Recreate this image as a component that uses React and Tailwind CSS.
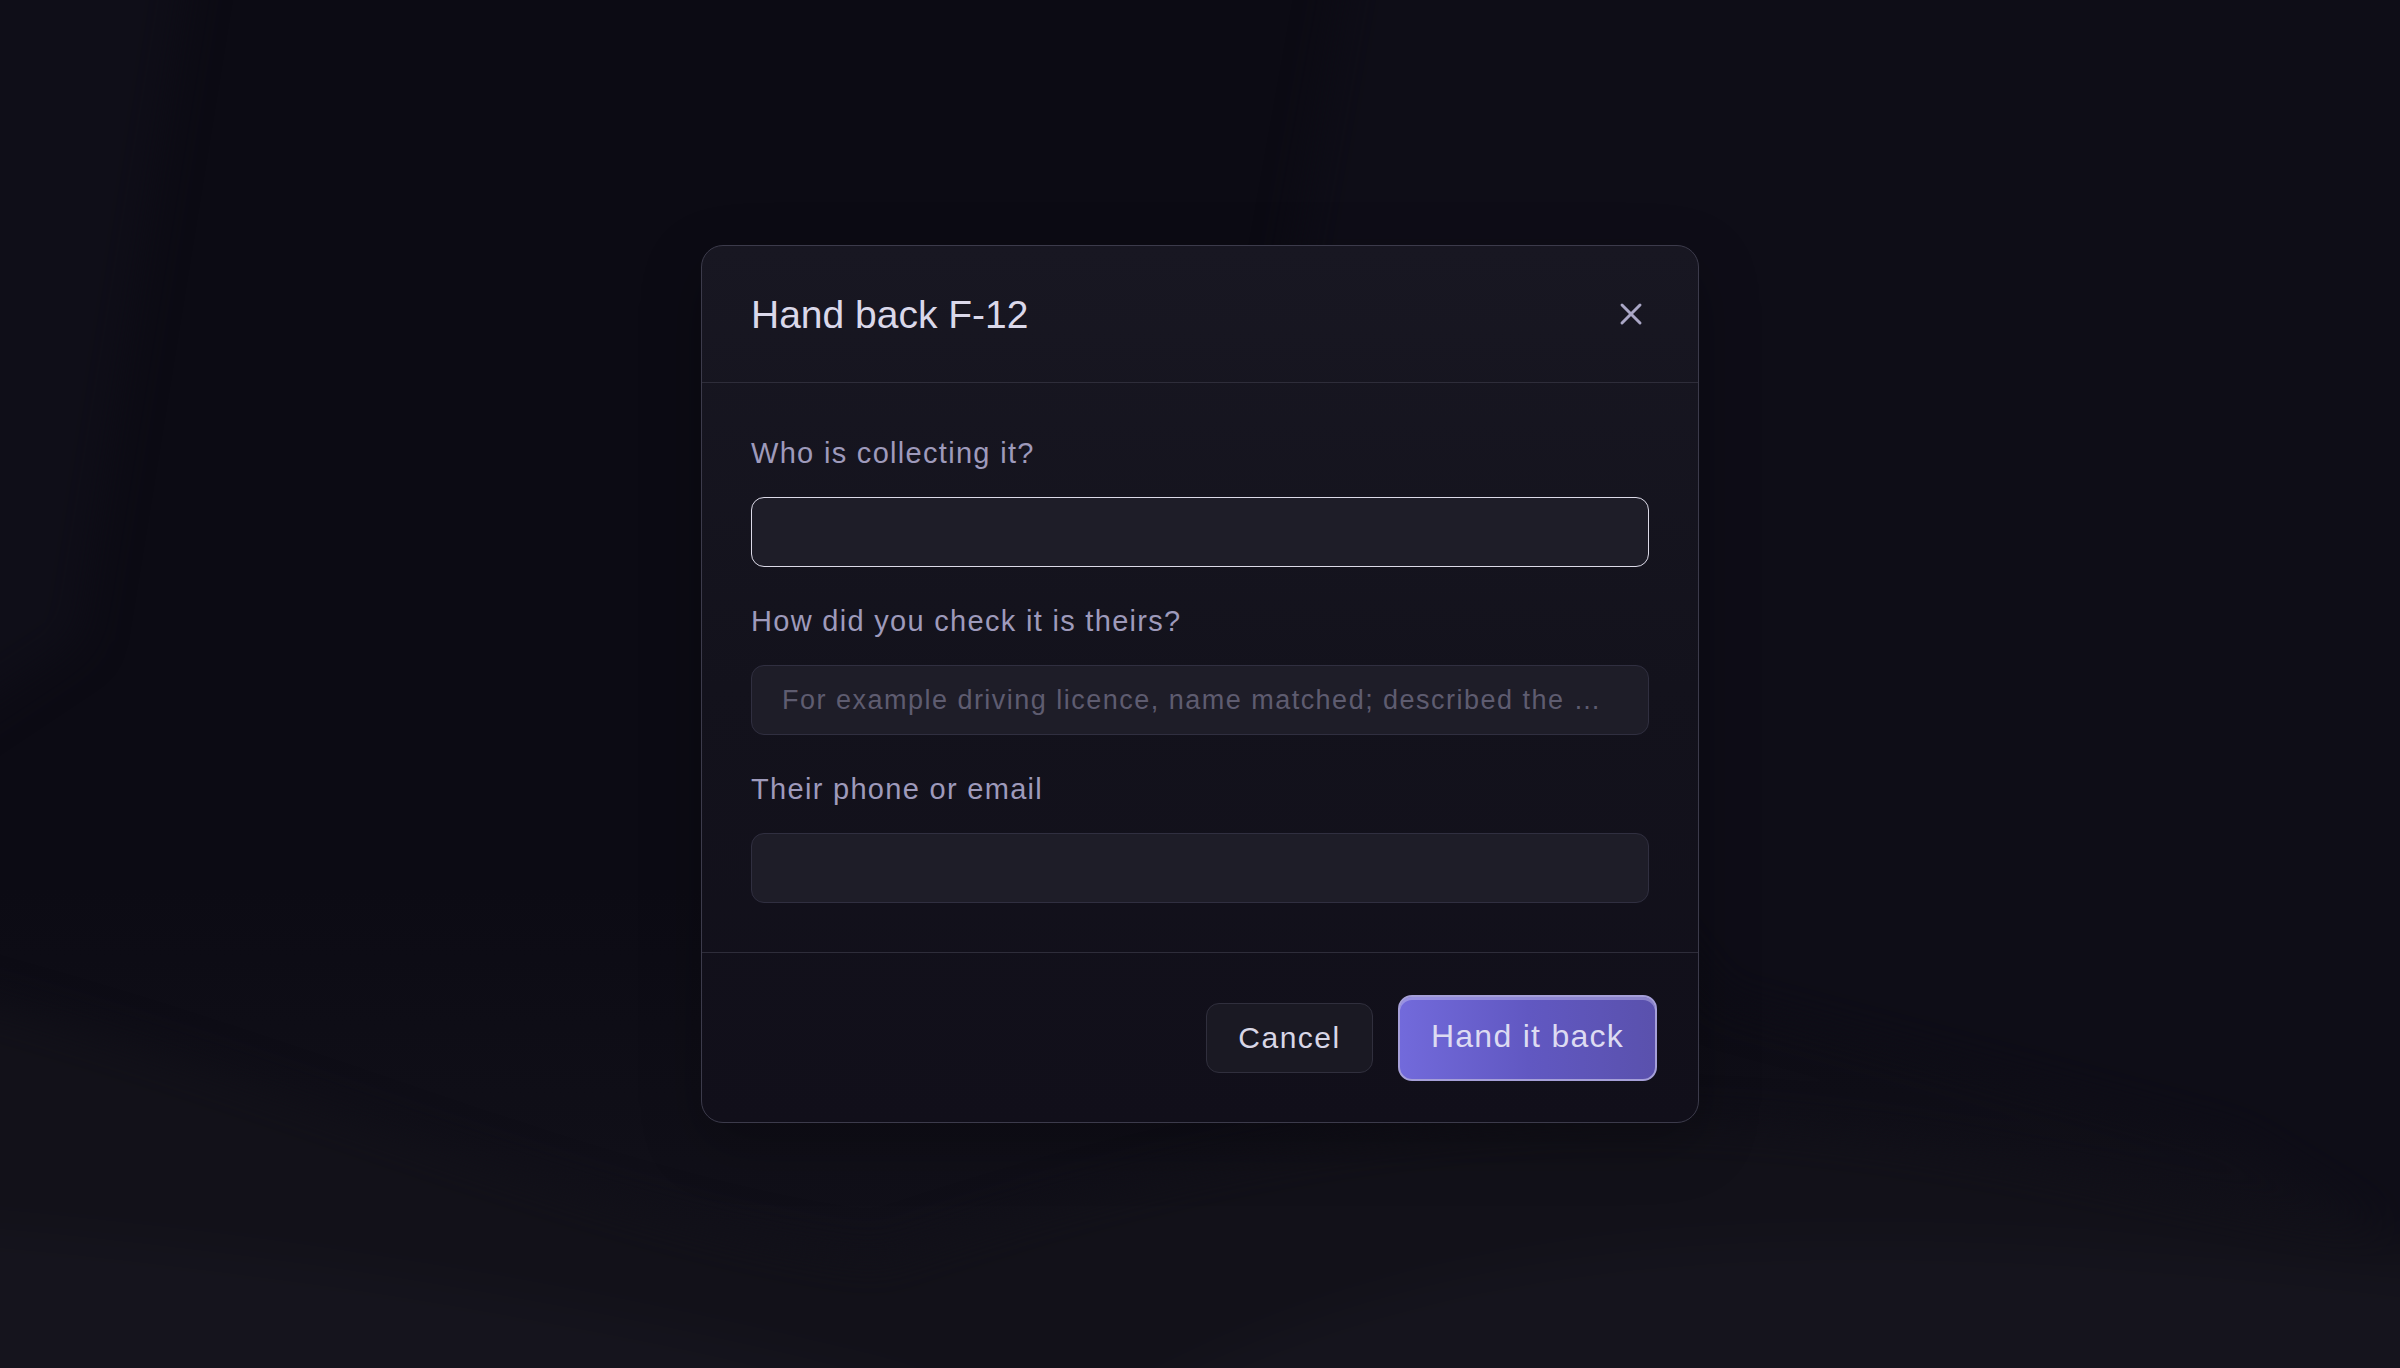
import React from "react";
import { X } from "lucide-react";

function Background() {
  return (
    <svg
      className="absolute inset-0 h-full w-full"
      viewBox="0 0 2400 1368"
      preserveAspectRatio="none"
      aria-hidden="true"
    >
      <defs>
        <linearGradient id="bgbase" x1="0" y1="0" x2="0" y2="1">
          <stop offset="0" stopColor="#0c0b14" />
          <stop offset="0.65" stopColor="#0c0b14" />
          <stop offset="1" stopColor="#13121b" />
        </linearGradient>
        <filter
          id="soft"
          filterUnits="userSpaceOnUse"
          x="-400"
          y="-400"
          width="3200"
          height="2200"
          colorInterpolationFilters="sRGB"
        >
          <feGaussianBlur stdDeviation="20" />
        </filter>
      </defs>
      <rect width="2400" height="1368" fill="url(#bgbase)" />
      <g filter="url(#soft)">
        <path d="M-100 -100 L200 -100 L80 640 L-100 760 Z" fill="#0f0e18" />
        <path d="M1360 -100 L2500 -100 L2500 1300 L2240 1140 L1720 1000 L1270 400 Z" fill="#0e0d17" />
        <path d="M-100 980 C300 1080 600 1230 880 1260 C1200 1150 1500 1100 1800 1130 C2100 1160 2300 1240 2500 1240 L2500 1500 L-100 1500 Z" fill="#121119" />
        <path d="M-100 1220 C400 1260 700 1330 980 1400 L-100 1450 Z" fill="#15141d" />
        <path d="M1050 1450 C1400 1220 1800 1200 2500 1290 L2500 1450 Z" fill="#15141d" />
      </g>
    </svg>
  );
}

function Field({ label, focused, placeholder }) {
  return (
    <div className="flex flex-col gap-[24px]">
      <label className="text-[29px] leading-[40px] tracking-[0.045em] text-[#9e9abb]">
        {label}
      </label>
      <input
        type="text"
        placeholder={placeholder}
        className={
          "h-[70px] w-full rounded-[13px] bg-[#1e1d28] px-[30px] text-[27px] tracking-[0.055em] text-[#d6d4e4] text-ellipsis outline-none placeholder:text-[#5e5c70] " +
          (focused
            ? "border-[1.5px] border-[#dcdae8]"
            : "border-[1.5px] border-[#302f40]")
        }
        style={{ fontFamily: '"Liberation Sans", Arial, sans-serif' }}
      />
    </div>
  );
}

export default function App() {
  return (
    <div
      className="relative flex h-[1368px] w-full items-center justify-center overflow-hidden bg-[#0c0b14]"
      style={{ fontFamily: '"Liberation Sans", Arial, sans-serif' }}
    >
      <Background />
      <div className="relative w-[998px] rounded-[22px] border-[1.5px] border-[#3c3b4b] bg-gradient-to-b from-[#181722] via-[#13121c] to-[#110f1a] shadow-[0_20px_60px_rgba(0,0,0,0.25)]">
        <div className="flex h-[137px] items-center justify-between border-b-[1.5px] border-[#2e2d3a] px-[49px]">
          <h2 className="text-[39px] font-normal leading-none text-[#dad8ea]">
            Hand back F-12
          </h2>
          <button className="flex h-[36px] w-[36px] items-center justify-center text-[#aaa7c6]">
            <X size={36} strokeWidth={2} />
          </button>
        </div>

        <div className="flex flex-col gap-[34px] px-[49px] pb-[49px] pt-[50px]">
          <Field label="Who is collecting it?" focused />
          <Field
            label="How did you check it is theirs?"
            placeholder="For example driving licence, name matched; described the …"
          />
          <Field label="Their phone or email" />
        </div>

        <div className="flex h-[170px] items-center justify-end gap-[25px] border-t-[1.5px] border-[#2e2d3a] pr-[41px]">
          <button className="h-[70px] w-[167px] rounded-[13px] border-[1.5px] border-[#302f3d] bg-[#1a1923] text-[30px] tracking-[0.05em] text-[#d8d6e6]">
            Cancel
          </button>
          <button className="relative h-[86px] w-[259px] rounded-[14px] border-2 border-[#a59fd8] bg-gradient-to-r from-[#726adb] via-[#6158c2] to-[#5a51ad] pb-[4px] text-[32px] tracking-[0.04em] text-[#dddbf2] shadow-[inset_0_3px_0_rgba(200,195,240,0.45)]">
            Hand it back
          </button>
        </div>
      </div>
    </div>
  );
}
